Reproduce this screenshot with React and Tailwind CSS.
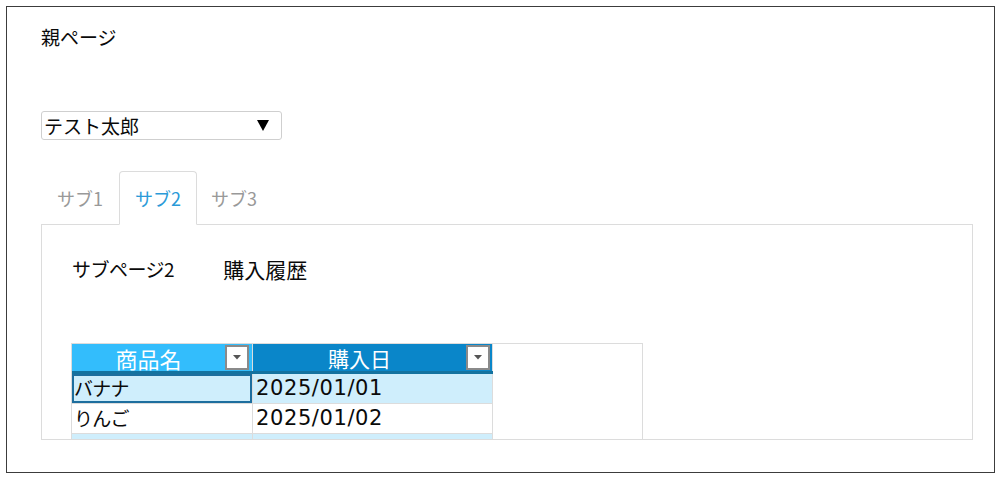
import React from "react";

const F = { fontFamily: '"Noto Sans CJK JP", "Noto Sans", sans-serif' };
const D = { fontFamily: '"DejaVu Sans", "Noto Sans CJK JP", sans-serif' };

function FilterBtn() {
  return (
    <div className="w-[24px] h-[25px] bg-white border-2 border-[#8a8a8a] flex items-center justify-center shrink-0">
      <svg width="8" height="5" viewBox="0 0 8 5"><polygon points="0,0 8,0 4,4.5" fill="#555" /></svg>
    </div>
  );
}

function Row({ name, date, bg, selected }) {
  return (
    <div className="flex w-fit h-[30px] border-b border-[#dcdcdc]">
      <div
        className={
          "w-[181px] pl-[2px] flex items-center border-r border-[#dcdcdc] text-[19px] tracking-[-0.8px] " +
          bg +
          (selected ? " shadow-[inset_0_0_0_2px_#1d6e9e]" : "")
        }
      >
        {name}
      </div>
      <div className={"w-[240px] pl-[3px] flex items-center border-r border-[#dcdcdc] text-[21px] tracking-[0.6px] " + bg} style={D}>
        {date}
      </div>
    </div>
  );
}

export default function App() {
  return (
    <div className="w-[1000px] h-[480px] bg-white overflow-hidden text-[#0a0a0a]" style={F}>
      <div className="ml-[6px] mt-[6px] w-[989px] h-[467px] border border-[#3c3c3c] pl-[34px] pt-[17px]">
        <div className="text-[19px] leading-[26px]">親ページ</div>
        <div className="mt-[61px] w-[241px] h-[29px] border border-[#cfcfcf] rounded-[3px] flex items-center justify-between pl-[2px] pr-[12px]">
          <span className="text-[19px] leading-[26px]">テスト太郎</span>
          <svg width="12" height="11" viewBox="0 0 12 11"><polygon points="0,0 12,0 6,11" fill="#000" /></svg>
        </div>
        <div className="mt-[31px] flex h-[54px] relative z-10">
          <div className="px-[15px] border border-transparent flex items-center text-[18px] text-[#999]">サブ1</div>
          <div className="px-[15px] border border-[#dcdcdc] border-b-white rounded-t-[4px] bg-white flex items-center text-[18px] text-[#2a9ad8]">サブ2</div>
          <div className="px-[13px] border border-transparent flex items-center text-[18px] text-[#999]">サブ3</div>
        </div>
        <div className="-mt-px w-[932px] h-[216px] border border-[#dcdcdc] overflow-hidden pl-[30px] pt-[31px]">
          <div className="flex items-center gap-[49px] leading-[26px]">
            <span className="text-[19px] tracking-[-0.5px]">サブページ2</span>
            <span className="text-[21px]">購入履歴</span>
          </div>
          <div className="mt-[61px] -ml-px w-[572px] h-[200px] border border-[#dcdcdc] flex flex-col">
            <div className="flex w-fit h-[30px] border-b-[3px] border-[#14729f]">
              <div className="w-[181px] bg-[#33bdfc] flex items-center pr-[3px] border-r border-[#dcdcdc]">
                <span className="flex-1 text-center text-white text-[22px] leading-[26px]">商品名</span>
                <FilterBtn />
              </div>
              <div className="w-[240px] bg-[#0a86c9] flex items-center pr-[2px] border-r border-[#dcdcdc]">
                <span className="flex-1 text-center text-white text-[21px] leading-[26px]">購入日</span>
                <FilterBtn />
              </div>
            </div>
            <Row name="バナナ" date="2025/01/01" bg="bg-[#cfeefc]" selected />
            <Row name="りんご" date="2025/01/02" bg="bg-white" />
            <Row name="みかん" date="2025/01/03" bg="bg-[#cfeefc]" />
          </div>
        </div>
      </div>
    </div>
  );
}
